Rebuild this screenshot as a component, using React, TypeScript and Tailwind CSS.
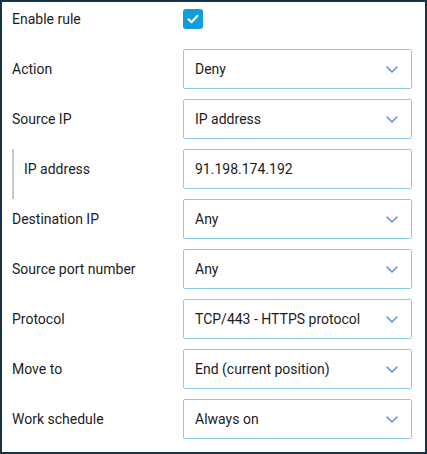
import React from "react";

const Chevron = () => (
  <svg width="12" height="7" viewBox="0 0 12 7" fill="none" className="shrink-0">
    <path d="M1 1l5 5 5-5" stroke="#5f8fd3" strokeWidth="1.5" strokeLinecap="round" strokeLinejoin="round" />
  </svg>
);

const Select = ({ value }: { value: string }) => (
  <div className="w-[229px] h-[40px] border border-[#8ccbea] rounded-[2px] flex items-center justify-between pl-[11px] pr-[13px] text-[14px] text-[#1c1c1e]">
    <span>{value}</span>
    <Chevron />
  </div>
);

const Row = ({ label, children, indent }: { label: string; children: React.ReactNode; indent?: boolean }) => (
  <div className="flex items-start h-[40px]">
    {indent ? (
      <div className="w-[171px] h-[50px] border-l-2 border-[#c8c8cc] pl-[10px] flex items-start">
        <div className="h-[40px] flex items-center">{label}</div>
      </div>
    ) : (
      <div className="w-[171px] h-[40px] flex items-center">{label}</div>
    )}
    {children}
  </div>
);

export default function App() {
  return (
    <div
      className="w-[427px] h-[454px] border-2 border-[#15344a] bg-white text-[14px] text-[#1c1c1e] pl-[10px] pr-[13px] pt-[7px]"
      style={{ fontFamily: "Roboto, 'Noto Sans', sans-serif" }}
    >
      <div className="flex items-center h-[20px] mb-[20px]">
        <div className="w-[171px]">Enable rule</div>
        <div className="w-[20px] h-[20px] rounded-[3px] bg-[#109ddd] flex items-center justify-center">
          <svg width="12" height="10" viewBox="0 0 12 10" fill="none">
            <path d="M1.5 5.2l3 3 6-6.4" stroke="white" strokeWidth="2" strokeLinecap="round" strokeLinejoin="round" />
          </svg>
        </div>
      </div>
      <div className="flex flex-col gap-[10px]">
        <Row label="Action"><Select value="Deny" /></Row>
        <Row label="Source IP"><Select value="IP address" /></Row>
        <Row label="IP address" indent>
          <div className="w-[229px] h-[40px] border border-[#8ccbea] rounded-[2px] flex items-center pl-[11px]">
            91.198.174.192
          </div>
        </Row>
        <Row label="Destination IP"><Select value="Any" /></Row>
        <Row label="Source port number"><Select value="Any" /></Row>
        <Row label="Protocol"><Select value="TCP/443 - HTTPS protocol" /></Row>
        <Row label="Move to"><Select value="End (current position)" /></Row>
        <Row label="Work schedule"><Select value="Always on" /></Row>
      </div>
    </div>
  );
}
